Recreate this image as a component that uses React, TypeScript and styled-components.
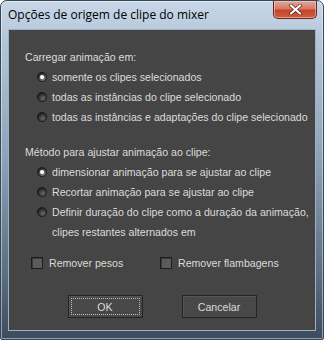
import React from 'react'
import styled, {createGlobalStyle} from 'styled-components'

const GlobalStyle = createGlobalStyle`
  html, body {
    margin: 0;
    padding: 0;
    background: #ffffff;
  }
`

const Window = styled.div`
  box-sizing: border-box;
  width: 324px;
  height: 340px;
  display: flex;
  flex-direction: column;
  border: 1px solid #34475b;
  border-radius: 7px 7px 2px 2px;
  background: linear-gradient(180deg, #c8d7e6 0%, #b3c6d9 12%, #8ea4ba 45%, #5c6f84 80%, #3c4c5e 100%);
  box-shadow: inset 0 0 0 1px rgba(255, 255, 255, 0.45);
`

const TitleBar = styled.div`
  height: 28px;
  display: flex;
  flex-direction: row;
  align-items: flex-start;
  justify-content: space-between;
`

const Title = styled.span`
  margin: 6px 0 0 7px;
  font-family: 'Open Sans', 'Noto Sans', sans-serif;
  font-size: 12px;
  line-height: 16px;
  color: #000000;
`

const CloseButton = styled.div`
  width: 44px;
  height: 18px;
  margin-right: 6px;
  display: flex;
  align-items: center;
  justify-content: center;
  box-sizing: border-box;
  border: 1px solid #5e2a22;
  border-top: none;
  border-radius: 0 0 5px 5px;
  background: linear-gradient(180deg, #e4a796 0%, #d67a64 45%, #c1452b 55%, #cf5d3f 100%);
  box-shadow: inset 0 0 0 1px rgba(255, 220, 210, 0.5);
`

const Panel = styled.div`
  flex: 1;
  margin: 0 7px 8px 7px;
  display: flex;
  flex-direction: column;
  padding: 17px 0 0 16px;
  background: #454545;
  border: 1px solid #9fb0c2;
  font-family: 'Liberation Sans', Arial, sans-serif;
  font-size: 10.6px;
  color: #dcdcdc;
`

const Section = styled.div<{gap: number}>`
  display: flex;
  flex-direction: column;
  margin-bottom: ${p => p.gap}px;
`

const Label = styled.div`
  height: 20px;
  line-height: 20px;
  white-space: nowrap;
`

const OptionRow = styled.div`
  height: 20px;
  display: flex;
  align-items: center;
  gap: 5px;
  padding-left: 12px;
  white-space: nowrap;
  svg {
    flex-shrink: 0;
  }
`

const ContinuationRow = styled(Label)`
  padding-left: 27px;
`

const CheckRow = styled.div`
  height: 20px;
  display: flex;
  align-items: center;
  padding-left: 6px;
  margin-bottom: 22px;
`

const CheckItem = styled.div`
  width: 129px;
  display: flex;
  align-items: center;
  gap: 6px;
  white-space: nowrap;
`

const CheckBox = styled.div`
  width: 12px;
  height: 12px;
  flex-shrink: 0;
  box-sizing: border-box;
  border: 1px solid #1c1c1c;
  background: #5b5b5b;
  box-shadow: inset 1px 1px 0 #3a3a3a;
`

const ButtonRow = styled.div`
  display: flex;
  justify-content: center;
  gap: 39px;
  margin-left: -16px;
`

const Button = styled.div<{focused?: boolean}>`
  width: 75px;
  height: 23px;
  box-sizing: border-box;
  display: flex;
  align-items: center;
  justify-content: center;
  border: 1px solid #242424;
  background: #484848;
  box-shadow: inset 1px 1px 0 #555555;
  color: #dcdcdc;
  position: relative;
  &::after {
    content: '';
    display: ${p => (p.focused ? 'block' : 'none')};
    position: absolute;
    inset: 2px;
    border: 1px dotted #bdbdbd;
  }
`

const Radio = ({checked}: {checked?: boolean}) => (
  <svg width="10" height="10" viewBox="0 0 10 10">
    <defs>
      <radialGradient id={checked ? 'rOn' : 'rOff'} cx="0.6" cy="0.65" r="0.6">
        <stop offset="0" stopColor={checked ? '#9a9a9a' : '#6a6a6a'} />
        <stop offset="1" stopColor="#1d1d1d" />
      </radialGradient>
    </defs>
    <circle cx="5" cy="5" r="4.6" fill={`url(#${checked ? 'rOn' : 'rOff'})`} stroke="#181818" strokeWidth="0.8" />
    {checked && <circle cx="5" cy="5" r="2" fill="#ffffff" />}
  </svg>
)

const CloseIcon = () => (
  <svg width="13" height="11" viewBox="0 0 13 11">
    <path d="M2 1.5 L11 9.5 M11 1.5 L2 9.5" stroke="#5a2318" strokeWidth="3.6" strokeLinecap="round" />
    <path d="M2 1.5 L11 9.5 M11 1.5 L2 9.5" stroke="#ffffff" strokeWidth="2.2" strokeLinecap="round" />
  </svg>
)

export default function App() {
  return <>
    <GlobalStyle />
    <Window>
      <TitleBar>
        <Title>Opções de origem de clipe do mixer</Title>
        <CloseButton><CloseIcon /></CloseButton>
      </TitleBar>
      <Panel>
        <Section gap={15}>
          <Label>Carregar animação em:</Label>
          <OptionRow><Radio checked />somente os clipes selecionados</OptionRow>
          <OptionRow><Radio />todas as instâncias do clipe selecionado</OptionRow>
          <OptionRow><Radio />todas as instâncias e adaptações do clipe selecionado</OptionRow>
        </Section>
        <Section gap={11}>
          <Label>Método para ajustar animação ao clipe:</Label>
          <OptionRow><Radio checked />dimensionar animação para se ajustar ao clipe</OptionRow>
          <OptionRow><Radio />Recortar animação para se ajustar ao clipe</OptionRow>
          <OptionRow><Radio />Definir duração do clipe como a duração da animação,</OptionRow>
          <ContinuationRow>clipes restantes alternados em</ContinuationRow>
        </Section>
        <CheckRow>
          <CheckItem><CheckBox />Remover pesos</CheckItem>
          <CheckItem><CheckBox />Remover flambagens</CheckItem>
        </CheckRow>
        <ButtonRow>
          <Button focused>OK</Button>
          <Button>Cancelar</Button>
        </ButtonRow>
      </Panel>
    </Window>
  </>
}
